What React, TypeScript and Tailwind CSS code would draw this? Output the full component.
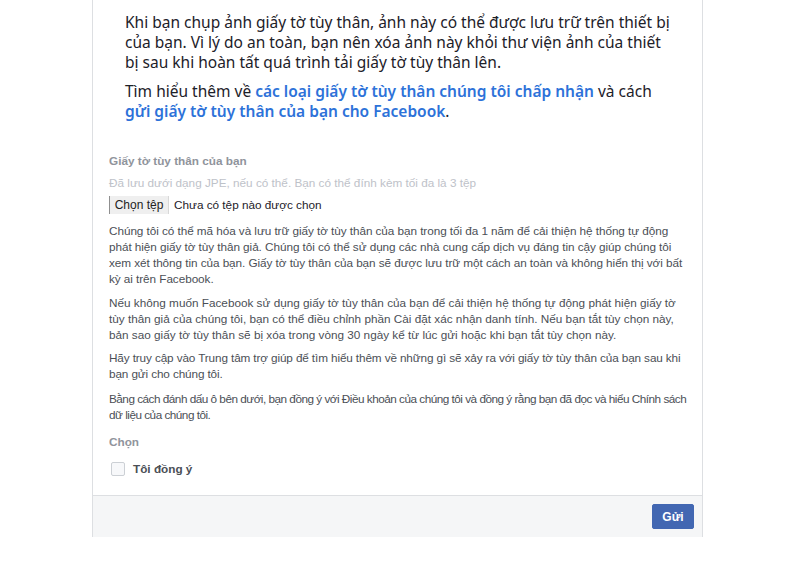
const App = () => {
  return (
    <div className="min-h-[566px] bg-white">
      {/* CARD */}
      <div className="ml-[92px] w-[611px] border-x border-[#dddfe2] bg-white">

        {/* INTRO */}
        <div className="px-[32px] pt-[12px] text-[15.5px] leading-[20px] text-[#1d2129] font-['Noto_Sans',sans-serif] whitespace-nowrap">
          <p>
            Khi bạn chụp ảnh giấy tờ tùy thân, ảnh này có thể được lưu trữ trên thiết bị
            <br />
            của bạn. Vì lý do an toàn, bạn nên xóa ảnh này khỏi thư viện ảnh của thiết
            <br />
            bị sau khi hoàn tất quá trình tải giấy tờ tùy thân lên.
          </p>
          <p className="mt-[9px]">
            Tìm hiểu thêm về{" "}
            <span className="font-semibold text-[#2d72d9]">các loại giấy tờ tùy thân chúng tôi chấp nhận</span>{" "}
            và cách
            <br />
            <span className="font-semibold text-[#2d72d9]">gửi giấy tờ tùy thân của bạn cho Facebook</span>.
          </p>
        </div>

        {/* FORM */}
        <div className="mt-[32px] px-[16px] pb-[18px] text-[11.75px] leading-[16px] font-['Liberation_Sans',Arial,sans-serif]">
          <div className="font-bold text-[#90949c]">Giấy tờ tùy thân của bạn</div>
          <div className="mt-[6px] text-[#bec2c9]">
            Đã lưu dưới dạng JPE, nếu có thể. Bạn có thể đính kèm tối đa là 3 tệp
          </div>

          {/* FILE INPUT */}
          <div className="mt-[5px] flex items-center h-[18px]">
            <button className="h-[18px] w-[60px] bg-[#efefef] border-l border-[#8f8f8f] border-r border-r-[#d8d8d8] text-[12px] leading-[16px] text-[#222]">
              Chọn tệp
            </button>
            <span className="ml-[5px] text-[#1d2129]">Chưa có tệp nào được chọn</span>
          </div>

          <div className="text-[#4b4f56] whitespace-nowrap">
            <p className="mt-[9px] tracking-[-0.06px]">
              Chúng tôi có thể mã hóa và lưu trữ giấy tờ tùy thân của bạn trong tối đa 1 năm để cải thiện hệ thống tự động
              <br />
              phát hiện giấy tờ tùy thân giả. Chúng tôi có thể sử dụng các nhà cung cấp dịch vụ đáng tin cậy giúp chúng tôi
              <br />
              xem xét thông tin của bạn. Giấy tờ tùy thân của bạn sẽ được lưu trữ một cách an toàn và không hiển thị với bất
              <br />
              kỳ ai trên Facebook.
            </p>
            <p className="mt-[8px]">
              Nếu không muốn Facebook sử dụng giấy tờ tùy thân của bạn để cải thiện hệ thống tự động phát hiện giấy tờ
              <br />
              tùy thân giả của chúng tôi, bạn có thể điều chỉnh phần Cài đặt xác nhận danh tính. Nếu bạn tắt tùy chọn này,
              <br />
              bản sao giấy tờ tùy thân sẽ bị xóa trong vòng 30 ngày kể từ lúc gửi hoặc khi bạn tắt tùy chọn này.
            </p>
            <p className="mt-[7px] tracking-[-0.12px]">
              Hãy truy cập vào Trung tâm trợ giúp để tìm hiểu thêm về những gì sẽ xảy ra với giấy tờ tùy thân của bạn sau khi
              <br />
              bạn gửi cho chúng tôi.
            </p>
            <p className="mt-[9px] tracking-[-0.5px]">
              Bằng cách đánh dấu ô bên dưới, bạn đồng ý với Điều khoản của chúng tôi và đồng ý rằng bạn đã đọc và hiểu Chính sách
              <br />
              dữ liệu của chúng tôi.
            </p>
          </div>

          {/* CHECKBOX */}
          <div className="mt-[11px] font-bold text-[#90949c]">Chọn</div>
          <label className="mt-[11px] flex items-center h-[16px] pl-[2px]">
            <span className="w-[14px] h-[14px] rounded-[2px] border border-[#ccd0d5] bg-[#f7f8fa]"></span>
            <span className="ml-[8px] font-bold text-[#4b4f56]">Tôi đồng ý</span>
          </label>
        </div>

        {/* FOOTER */}
        <div className="border-t border-[#dddfe2] bg-[#f5f6f7] py-[8px] pr-[8px] flex justify-end">
          <button className="w-[42px] h-[25px] rounded-[2px] bg-[#4267b2] border border-[#4267b2] text-white text-[12px] font-bold font-['Liberation_Sans',Arial,sans-serif]">
            Gửi
          </button>
        </div>

      </div>
    </div>
  );
};

export default App;
